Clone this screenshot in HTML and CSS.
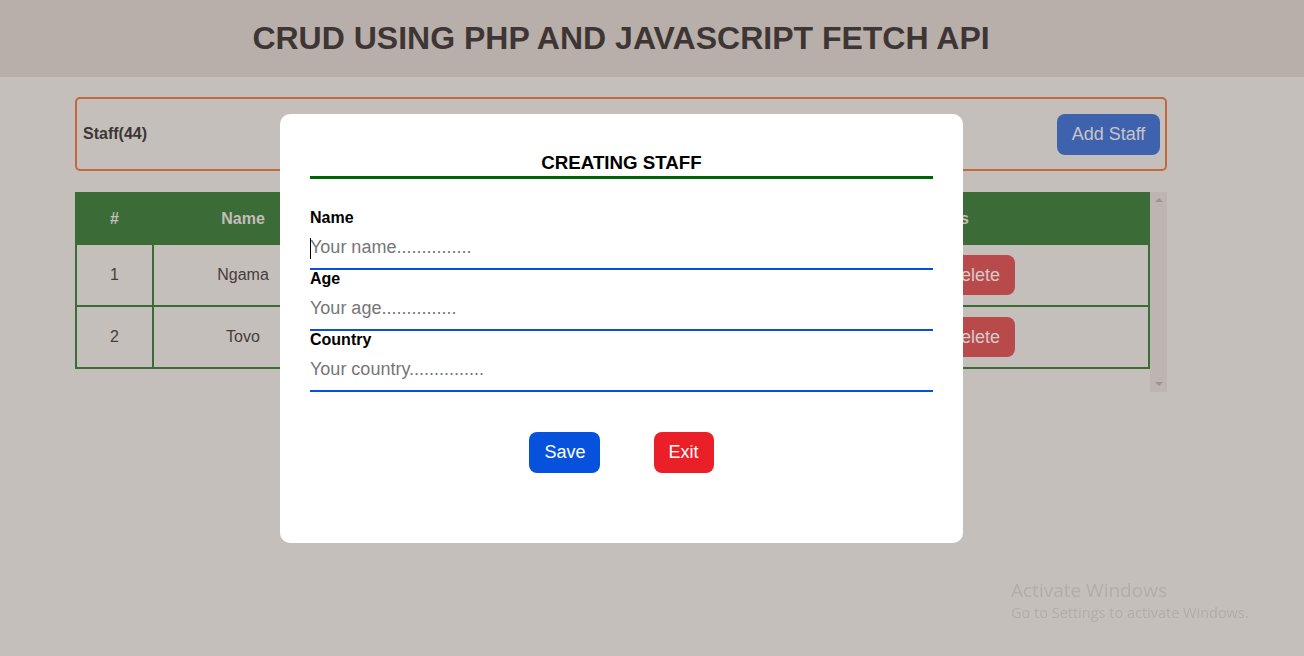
FILE: index.html
```html
<!DOCTYPE html>
<html lang="en">
<head>
<meta charset="utf-8">
<title>CRUD using PHP and JavaScript Fetch API</title>
<link rel="stylesheet" href="styles.css">
</head>
<body>
<header class="topbar">
  <h1 class="title">CRUD USING PHP AND JAVASCRIPT FETCH API</h1>
</header>
<main class="container">
  <div class="staff-bar">
    <span class="staff-count">Staff(44)</span>
    <button class="btn btn-add">Add Staff</button>
  </div>
  <div class="table-wrap">
    <table class="staff-table">
      <thead>
        <tr>
          <th class="col-id">#</th>
          <th class="col-name">Name</th>
          <th class="col-age">Age</th>
          <th class="col-country">Country</th>
          <th class="col-actions">Actions</th>
        </tr>
      </thead>
      <tbody>
        <tr>
          <td>1</td>
          <td>Ngama</td>
          <td>25</td>
          <td>Madagascar</td>
          <td><div class="actions"><button class="btn btn-edit">Edit</button><button class="btn btn-delete">Delete</button></div></td>
        </tr>
        <tr>
          <td>2</td>
          <td>Tovo</td>
          <td>30</td>
          <td>Madagascar</td>
          <td><div class="actions"><button class="btn btn-edit">Edit</button><button class="btn btn-delete">Delete</button></div></td>
        </tr>
      </tbody>
    </table>
    <div class="scrollbar">
      <span class="arrow arrow-up"></span>
      <span class="arrow arrow-down"></span>
    </div>
  </div>
</main>

<div class="modal-layer">
  <div class="modal">
    <h2 class="modal-title">CREATING STAFF</h2>
    <form class="modal-form">
      <label class="field-label" for="name">Name</label>
      <div class="input-wrap">
        <span class="caret"></span>
        <input class="field-input" id="name" type="text" placeholder="Your name...............">
      </div>
      <label class="field-label" for="age">Age</label>
      <input class="field-input" id="age" type="text" placeholder="Your age...............">
      <label class="field-label" for="country">Country</label>
      <input class="field-input" id="country" type="text" placeholder="Your country...............">
      <div class="modal-actions">
        <button type="button" class="btn btn-save">Save</button>
        <button type="button" class="btn btn-exit">Exit</button>
      </div>
    </form>
  </div>
</div>

<div class="watermark">
  <div class="wm-title">Activate Windows</div>
  <div class="wm-sub">Go to Settings to activate Windows.</div>
</div>
</body>
</html>
```

FILE: styles.css
```css
* { box-sizing: border-box; }

html, body {
  margin: 0;
  padding: 0;
}

body {
  background: #c5bfbc;
  font-family: "Liberation Sans", Arial, sans-serif;
  color: #453b3a;
  height: 656px;
  overflow: hidden;
}

.topbar {
  background: #b8afab;
  height: 77px;
  padding-left: 75px;
}

.title {
  width: 1092px;
  margin: 0;
  height: 77px;
  line-height: 77px;
  text-align: center;
  font-size: 32px;
  font-weight: bold;
  color: #3e3634;
}

.container {
  margin-left: 75px;
  width: 1092px;
}

.staff-bar {
  margin-top: 20px;
  height: 74px;
  border: 2px solid #c2683f;
  border-radius: 5px;
  display: flex;
  align-items: center;
  justify-content: space-between;
  padding: 0 5px 0 6px;
}

.staff-count {
  font-size: 16px;
  font-weight: bold;
  color: #3e3634;
}

.btn {
  border: none;
  border-radius: 8px;
  font-family: "Liberation Sans", Arial, sans-serif;
  font-size: 18px;
  height: 41px;
  padding: 0 15px;
  cursor: pointer;
}

.btn-add {
  background: #3e62ad;
  color: #c9c4c8;
  width: 103px;
  padding: 0;
}

.table-wrap {
  margin-top: 21px;
  height: 200px;
  display: flex;
}

.staff-table {
  width: 1075px;
  border-collapse: collapse;
  align-self: flex-start;
  font-size: 16px;
}

.staff-table th,
.staff-table td {
  border: 2px solid #3b6c36;
  text-align: center;
  padding: 0;
}

.staff-table th {
  background: #3b6b36;
  color: #c3bebb;
  font-weight: bold;
  height: 51px;
}

.staff-table td {
  height: 62px;
  color: #463c3b;
}

.col-id { width: 77px; }
.col-name { width: 180px; }
.col-age { width: 200px; }
.col-country { width: 197px; }

.actions {
  display: flex;
  justify-content: center;
  gap: 8px;
}

.btn-edit {
  background: #3e62ad;
  color: #d0cacb;
  height: 40px;
}

.btn-delete {
  background: #b94a4c;
  color: #d9cbcb;
  height: 40px;
}

.scrollbar {
  width: 17px;
  height: 200px;
  background: #bcb5b2;
  display: flex;
  flex-direction: column;
  justify-content: space-between;
  align-items: center;
  padding: 6px 0;
}

.arrow {
  width: 0;
  height: 0;
  border-left: 4px solid transparent;
  border-right: 4px solid transparent;
}

.arrow-up { border-bottom: 4px solid #9d9591; }
.arrow-down { border-top: 4px solid #9d9591; }

.modal-layer {
  position: fixed;
  inset: 0;
  padding-left: 75px;
  padding-top: 114px;
}

.modal-layer .modal {
  margin-left: 205px;
}

.modal {
  width: 683px;
  height: 429px;
  background: #ffffff;
  border-radius: 10px;
  padding: 38px 30px 0 30px;
}

.modal-title {
  margin: 0;
  font-size: 18.72px;
  line-height: 22px;
  font-weight: bold;
  text-align: center;
  color: #000;
  padding-bottom: 2px;
  border-bottom: 3px solid #006400;
}

.modal-form {
  display: flex;
  flex-direction: column;
  margin-top: 30px;
}

.field-label {
  font-size: 16px;
  line-height: 18px;
  font-weight: bold;
  color: #000;
}

.input-wrap {
  position: relative;
  display: flex;
  flex-direction: column;
}

.caret {
  position: absolute;
  left: 0;
  top: 11px;
  width: 1px;
  height: 21px;
  background: #000;
}

.field-input {
  height: 43px;
  border: none;
  border-bottom: 2px solid #0a50d6;
  outline: none;
  padding: 0;
  font-family: "Liberation Sans", Arial, sans-serif;
  font-size: 18px;
  color: #000;
  background: transparent;
  caret-color: #000;
}

.field-input::placeholder {
  color: #767676;
}

.modal-actions {
  display: flex;
  justify-content: center;
  gap: 54px;
  margin-top: 40px;
}

.btn-save {
  background: #0652dd;
  color: #fff;
  padding: 0 14px 0 15px;
}

.btn-exit {
  background: #ea1f27;
  color: #fff;
}

.watermark {
  position: fixed;
  left: 1011px;
  top: 578px;
  font-family: "Open Sans", "Noto Sans", sans-serif;
  color: #b3aca9;
}

.wm-title {
  font-size: 19px;
  line-height: 25px;
}

.wm-sub {
  font-size: 14.5px;
  line-height: 20px;
}
```
